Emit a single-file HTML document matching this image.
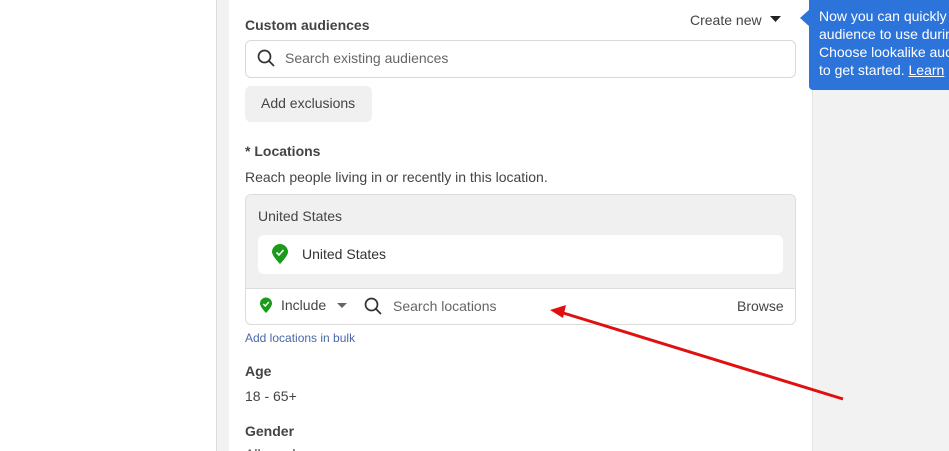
<!DOCTYPE html>
<html style="overflow:hidden;height:451px"><head><style>
body{margin:0;width:949px;height:451px;overflow:hidden;background:#fff;font-family:"Liberation Sans",sans-serif;position:relative;color:#1c1e21}
.abs{position:absolute}
.t{font-size:14px}
</style></head><body>
<div class="abs" style="left:216px;top:0;width:1px;height:451px;background:#dcdcdc"></div>
<div class="abs" style="left:217px;top:0;width:12px;height:451px;background:#f2f2f2"></div>
<div class="abs" style="left:812px;top:0;width:137px;height:451px;background:#f2f2f2;border-left:1px solid #e4e4e4"></div>

<div class="abs t" style="left:245px;top:17px;font-weight:bold;color:#444">Custom audiences</div>
<div class="abs t" style="left:690px;top:12px;color:#444">Create new</div>
<svg class="abs" style="left:770px;top:16px" width="11" height="7"><path d="M0 0H11L5.5 6Z" fill="#222"/></svg>

<div class="abs" style="left:245px;top:40px;width:549px;height:36px;border:1px solid #d9d9d9;border-radius:6px"></div>
<svg class="abs" style="left:257px;top:49px" width="18" height="18"><circle cx="7.5" cy="7.5" r="6" fill="none" stroke="#333" stroke-width="1.7"/><path d="M12 12L17 17" stroke="#333" stroke-width="1.8"/></svg>
<div class="abs t" style="left:285px;top:50px;color:#666">Search existing audiences</div>

<div class="abs" style="left:245px;top:86px;width:127px;height:36px;background:#f0f0f0;border-radius:6px"></div>
<div class="abs t" style="left:261px;top:95px;color:#444">Add exclusions</div>

<div class="abs t" style="left:245px;top:143px;font-weight:bold;color:#444">* Locations</div>
<div class="abs t" style="left:245px;top:169px;color:#444">Reach people living in or recently in this location.</div>

<div class="abs" style="left:245px;top:194px;width:549px;height:129px;border:1px solid #dcdcdc;border-radius:6px;overflow:hidden">
 <div style="height:93px;background:#f0f0f0;border-bottom:1px solid #dcdcdc"></div>
</div>
<div class="abs t" style="left:258px;top:208px;color:#444">United States</div>
<div class="abs" style="left:258px;top:235px;width:525px;height:39px;background:#fff;border-radius:6px"></div>
<svg class="abs" style="left:271px;top:244px" width="18" height="21"><path d="M9 20C9 20 1 12 1 8A8 8 0 0 1 17 8C17 12 9 20 9 20Z" fill="#1a9b1a"/><path d="M5.5 8.5L8 11L12.5 6" stroke="#fff" stroke-width="1.6" fill="none"/></svg>
<div class="abs t" style="left:302px;top:246px;color:#333">United States</div>

<svg class="abs" style="left:259px;top:297px" width="14" height="17"><path d="M7 16C7 16 1 10 1 6.5A6 6 0 0 1 13 6.5C13 10 7 16 7 16Z" fill="#1a9b1a"/><path d="M4.3 7L6.3 9L9.8 5" stroke="#fff" stroke-width="1.4" fill="none"/></svg>
<div class="abs t" style="left:281px;top:297px;color:#444">Include</div>
<svg class="abs" style="left:337px;top:303px" width="10" height="6"><path d="M0 0H10L5 5Z" fill="#666"/></svg>
<svg class="abs" style="left:364px;top:297px" width="18" height="18"><circle cx="7.5" cy="7.5" r="6" fill="none" stroke="#333" stroke-width="1.7"/><path d="M12 12L17 17" stroke="#333" stroke-width="1.8"/></svg>
<div class="abs t" style="left:393px;top:298px;color:#666">Search locations</div>
<div class="abs t" style="left:737px;top:298px;color:#444">Browse</div>

<div class="abs" style="left:245px;top:331px;font-size:12px;color:#4a69a8">Add locations in bulk</div>
<div class="abs t" style="left:245px;top:363px;font-weight:bold;color:#444">Age</div>
<div class="abs t" style="left:245px;top:388px;color:#444">18 - 65+</div>
<div class="abs t" style="left:245px;top:423px;font-weight:bold;color:#444">Gender</div>
<div class="abs" style="left:245px;top:440px;height:11px;overflow:hidden"><div class="t" style="margin-top:6px;color:#444">All genders</div></div>

<div class="abs" style="left:809px;top:0;width:140px;height:90px;background:#2d74da;border-radius:0 0 0 4px"></div>
<svg class="abs" style="left:800px;top:9px" width="10" height="18"><path d="M10 0L0 9L10 18Z" fill="#2d74da"/></svg>
<div class="abs" style="left:819px;top:7px;font-size:14px;line-height:18px;color:#fff;white-space:nowrap">Now you can quickly<br>audience to use durin<br>Choose lookalike auc<br>to get started. <u>Learn</u></div>

<svg class="abs" style="left:0;top:0" width="949" height="451"><path d="M843 399L560 312" stroke="#e01010" stroke-width="3"/><path d="M550 310L566 305L563 318Z" fill="#e01010"/></svg>
</body></html>
